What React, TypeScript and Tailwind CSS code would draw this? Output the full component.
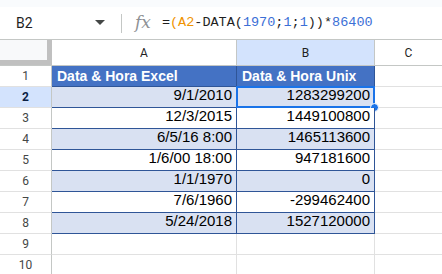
const rows: { a: string; b: string }[] = [
  { a: "9/1/2010", b: "1283299200" },
  { a: "12/3/2015", b: "1449100800" },
  { a: "6/5/16 8:00", b: "1465113600" },
  { a: "1/6/00 18:00", b: "947181600" },
  { a: "1/1/1970", b: "0" },
  { a: "7/6/1960", b: "-299462400" },
  { a: "5/24/2018", b: "1527120000" },
];

const cellFont = { fontFamily: "'Liberation Sans', Arial, sans-serif" };

function RowNum({ n, selected }: { n: number; selected?: boolean }) {
  return (
    <div
      className={`w-[52px] h-full flex items-center justify-center border-r border-b border-r-[#c4c7c5] border-b-[#e1e1e1] text-[12px] ${
        selected ? "bg-[#d3e3fd] font-bold text-[#0b1f44]" : "bg-white text-[#444746]"
      }`}
      style={{ fontFamily: "Roboto, sans-serif" }}
    >
      {n}
    </div>
  );
}

export default function App() {
  return (
    <div className="w-[442px] h-[274px] overflow-hidden bg-white select-none">
      <div className="h-[7px] bg-[#f9fbfd]" />
      {/* formula bar */}
      <div
        className="h-[33px] flex items-center border-b border-[#c4c7c5] text-[14px] text-[#1f1f1f]"
        style={{ fontFamily: "Roboto, sans-serif" }}
      >
        <div className="w-[92px] pl-[16px]">B2</div>
        <svg width="10" height="6" viewBox="0 0 10 6" className="ml-[3px]">
          <path d="M0 0h10L5 5z" fill="#444746" />
        </svg>
        <div className="ml-[16px] w-px h-[19px] bg-[#c4c7c5]" />
        <div
          className="ml-[13px] text-[17px] italic text-[#8e9195]"
          style={{ fontFamily: "'DejaVu Serif', serif" }}
        >
          fx
        </div>
        <div
          className="ml-[11px] text-[13.5px] text-[#1f1f1f]"
          style={{ fontFamily: "'Liberation Mono', monospace" }}
        >
          =<span className="text-[#f09300]">(A2</span>-DATA(
          <span className="text-[#3b6fd6]">1970</span>;
          <span className="text-[#3b6fd6]">1</span>;
          <span className="text-[#3b6fd6]">1</span>))*
          <span className="text-[#3b6fd6]">86400</span>
        </div>
      </div>
      {/* column headers */}
      <div
        className="h-[26px] flex border-b border-[#c4c7c5] text-[12px] text-[#1f1f1f]"
        style={{ fontFamily: "Roboto, sans-serif" }}
      >
        <div className="w-[52px] h-full bg-[#f8f9fa] border-r-[5px] border-b-[5px] border-[#c0c0c0]" />
        <div className="w-[185px] flex items-center justify-center border-r border-[#c4c7c5]">A</div>
        <div className="w-[138px] flex items-center justify-center bg-[#d3e3fd] border-r border-[#c4c7c5]">
          B
        </div>
        <div className="flex-1 flex items-center justify-center">C</div>
      </div>
      {/* header row 1 */}
      <div className="h-[21px] flex">
        <RowNum n={1} />
        <div
          className="w-[185px] flex items-center pl-[5px] bg-[#4472c4] border-r border-b border-[#2f5597] text-white font-bold text-[14px]"
          style={cellFont}
        >
          Data &amp; Hora Excel
        </div>
        <div
          className="w-[138px] flex items-center pl-[5px] bg-[#4472c4] border-r border-b border-[#2f5597] text-white font-bold text-[14px]"
          style={cellFont}
        >
          Data &amp; Hora Unix
        </div>
        <div className="flex-1 border-b border-[#e1e1e1]" />
      </div>
      {rows.map((r, i) => {
        const shaded = i % 2 === 0;
        const bg = shaded ? "bg-[#d9e1f2]" : "bg-white";
        return (
          <div key={i} className="h-[21px] flex">
            <RowNum n={i + 2} selected={i === 0} />
            <div
              className={`w-[185px] flex items-end justify-end pr-[4px] pb-[1px] border-r border-b border-[#2f5597] text-[15px] text-black ${bg}`}
              style={cellFont}
            >
              {r.a}
            </div>
            <div
              className={`relative w-[138px] flex items-end justify-end pr-[4px] pb-[1px] border-r border-b border-[#2f5597] text-[15px] text-black ${bg}`}
              style={cellFont}
            >
              {r.b}
              {i === 0 && (
                <>
                  <div className="absolute -left-[1px] -top-[1px] -right-[1px] -bottom-[1px] border-2 border-[#1a73e8]" />
                  <div className="absolute -right-[5px] -bottom-[5px] w-[9px] h-[9px] rounded-full bg-[#1a73e8] border border-white" />
                </>
              )}
            </div>
            <div className="flex-1 border-b border-[#e1e1e1]" />
          </div>
        );
      })}
      {[9, 10].map((n) => (
        <div key={n} className="h-[21px] flex">
          <RowNum n={n} />
          <div className="w-[185px] border-r border-b border-[#e1e1e1]" />
          <div className="w-[138px] border-r border-b border-[#e1e1e1]" />
          <div className="flex-1 border-b border-[#e1e1e1]" />
        </div>
      ))}
    </div>
  );
}
